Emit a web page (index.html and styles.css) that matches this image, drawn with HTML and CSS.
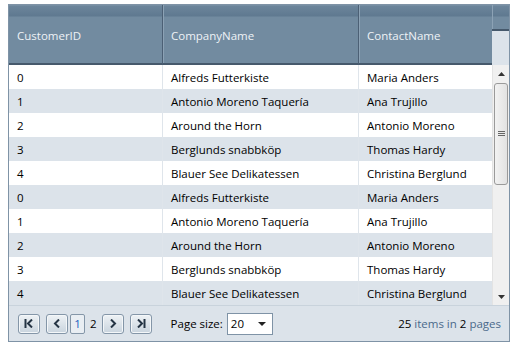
FILE: index.html
```html
<!DOCTYPE html>
<html>
<head>
<meta charset="utf-8">
<link rel="stylesheet" href="styles.css">
</head>
<body>
<div class="grid">
  <div class="head">
    <div class="hcell c1">CustomerID</div>
    <div class="hcell c2">CompanyName</div>
    <div class="hcell c3">ContactName</div>
    <div class="hscroll"><div class="hscroll-top"></div><div class="hscroll-bot"></div></div>
  </div>
  <div class="body">
    <div class="rows">
      <div class="row"><div class="cell c1">0</div><div class="cell c2">Alfreds Futterkiste</div><div class="cell c3">Maria Anders</div></div>
      <div class="row alt"><div class="cell c1">1</div><div class="cell c2">Antonio Moreno Taquería</div><div class="cell c3">Ana Trujillo</div></div>
      <div class="row"><div class="cell c1">2</div><div class="cell c2">Around the Horn</div><div class="cell c3">Antonio Moreno</div></div>
      <div class="row alt"><div class="cell c1">3</div><div class="cell c2">Berglunds snabbköp</div><div class="cell c3">Thomas Hardy</div></div>
      <div class="row"><div class="cell c1">4</div><div class="cell c2">Blauer See Delikatessen</div><div class="cell c3">Christina Berglund</div></div>
      <div class="row alt"><div class="cell c1">0</div><div class="cell c2">Alfreds Futterkiste</div><div class="cell c3">Maria Anders</div></div>
      <div class="row"><div class="cell c1">1</div><div class="cell c2">Antonio Moreno Taquería</div><div class="cell c3">Ana Trujillo</div></div>
      <div class="row alt"><div class="cell c1">2</div><div class="cell c2">Around the Horn</div><div class="cell c3">Antonio Moreno</div></div>
      <div class="row"><div class="cell c1">3</div><div class="cell c2">Berglunds snabbköp</div><div class="cell c3">Thomas Hardy</div></div>
      <div class="row alt"><div class="cell c1">4</div><div class="cell c2">Blauer See Delikatessen</div><div class="cell c3">Christina Berglund</div></div>
    </div>
    <div class="scrollbar">
      <div class="sb-btn"><svg width="7" height="4" viewBox="0 0 7 4"><path d="M0 4 L3.5 0 L7 4Z" fill="#333"/></svg></div>
      <div class="sb-track">
        <div class="thumb"><svg width="7" height="6" viewBox="0 0 7 6"><path d="M0 0.5h7M0 2.5h7M0 4.5h7" stroke="#666" stroke-width="1"/></svg></div>
      </div>
      <div class="sb-btn"><svg width="7" height="4" viewBox="0 0 7 4"><path d="M0 0 L3.5 4 L7 0Z" fill="#333"/></svg></div>
    </div>
  </div>
  <div class="pager">
    <div class="nav">
      <div class="pbtn"><svg width="10" height="9" viewBox="0 0 10 9"><path d="M1.5 0v9" stroke="#243444" stroke-width="2"/><path d="M8 0.5L4 4.5L8 8.5" stroke="#243444" stroke-width="2" fill="none"/></svg></div>
      <div class="pbtn prev"><svg width="10" height="9" viewBox="0 0 10 9"><path d="M7 0.5L3 4.5L7 8.5" stroke="#243444" stroke-width="2" fill="none"/></svg></div>
      <div class="pnum cur">1</div>
      <div class="pnum two">2</div>
      <div class="pbtn next"><svg width="10" height="9" viewBox="0 0 10 9"><path d="M3 0.5L7 4.5L3 8.5" stroke="#243444" stroke-width="2" fill="none"/></svg></div>
      <div class="pbtn last"><svg width="10" height="9" viewBox="0 0 10 9"><path d="M2 0.5L6 4.5L2 8.5" stroke="#243444" stroke-width="2" fill="none"/><path d="M8.5 0v9" stroke="#243444" stroke-width="2"/></svg></div>
    </div>
    <div class="psize">
      <span class="plabel">Page size:</span>
      <div class="select"><span>20</span><svg width="8" height="4" viewBox="0 0 8 4"><path d="M0 0L4 4L8 0Z" fill="#222"/></svg></div>
    </div>
    <div class="info"><b>25</b> items in <b>2</b> pages</div>
  </div>
</div>
</body>
</html>
```
FILE: styles.css
```css
* { box-sizing: border-box; }
body {
  margin: 0;
  background: #fff;
  font-family: "Open Sans", "Segoe UI", sans-serif;
  font-size: 11.5px;
  color: #000;
}
.grid {
  margin: 4px 0 0 8px;
  width: 502px;
  height: 338px;
  border: 1px solid #7f93a6;
  display: flex;
  flex-direction: column;
  background: #dce3ea;
}
.head {
  display: flex;
  height: 60px;
  flex: none;
}
.hcell {
  height: 60px;
  background: linear-gradient(#8097ab 0, #6c859b 1px, #5f7990 11px, #728ba0 12px, #728ba0 100%);
  border-bottom: 2px solid #46596c;
  color: #eef2f6;
  display: flex;
  align-items: center;
  padding-left: 8px;
  padding-top: 3px;
  border-right: 1px solid #4c6075;
  box-shadow: inset 1px 0 0 #8ca2b5;
}
.c1 { width: 154px; flex: none; }
.c2 { width: 196px; flex: none; }
.c3 { width: 133px; flex: none; }
.hcell.c1 { box-shadow: none; }
.hcell.c3 { border-right: none; }
.hscroll { width: 17px; flex: none; display: flex; flex-direction: column; }
.hscroll-top {
  height: 26px;
  background: linear-gradient(#8097ab 0, #6c859b 1px, #5f7990 11px, #728ba0 12px, #728ba0 100%);
  border-bottom: 2px solid #46596c;
  box-shadow: inset 1px 0 0 #8ca2b5;
}
.hscroll-bot { flex: 1; background: #dce3ea; }
.body {
  display: flex;
  height: 240px;
  flex: none;
}
.rows { width: 483px; flex: none; }
.row {
  display: flex;
  height: 24px;
  background: #fff;
}
.row.alt { background: #dce3ea; }
.cell {
  display: flex;
  align-items: center;
  padding-left: 8px;
  padding-top: 1px;
  white-space: nowrap;
  overflow: hidden;
}
.row .c2, .row .c3 { border-left: 1px solid #dfe5eb; }
.row .c1 { width: 153px; }
.row .c2 { width: 196px; }
.row .c3 { width: 134px; }
.scrollbar {
  width: 17px;
  flex: none;
  background: #f0f0f0;
  border-left: 1px solid #e3e3e3;
  display: flex;
  flex-direction: column;
}
.sb-btn {
  height: 17px;
  display: flex;
  align-items: center;
  justify-content: center;
  flex: none;
}
.sb-track { flex: 1; padding: 1px 1px 0 1px; }
.thumb {
  height: 102px;
  border: 1px solid #9a9a9a;
  border-radius: 3px;
  background: linear-gradient(90deg, #f2f2f2, #e2e2e2);
  display: flex;
  align-items: center;
  justify-content: center;
}
.pager {
  flex: 1;
  border-top: 1px solid #c9d3dc;
  display: flex;
  align-items: center;
  padding: 0 8px 0 9px;
}
.nav { display: flex; align-items: center; }
.pbtn {
  width: 22px;
  height: 20px;
  border: 1px solid #8496a8;
  border-radius: 3px;
  background: linear-gradient(#eef2f5, #c9d4de);
  display: flex;
  align-items: center;
  justify-content: center;
  box-shadow: inset 0 0 0 1px #f4f7f9;
}
.pbtn.prev { margin-left: 6px; }
.pbtn.next { margin-left: 5px; }
.pbtn.last { margin-left: 6px; }
.pnum.cur {
  margin-left: 2px;
  color: #1d5fbf;
  border: 1px solid #8496a8;
  border-radius: 2px;
  background: #e9eef3;
  height: 20px;
  width: 15px;
  display: flex;
  align-items: center;
  justify-content: center;
}
.pnum.two { margin-left: 5px; }
.psize { display: flex; align-items: center; margin-left: 19px; }
.plabel { margin-right: 4px; }
.select {
  width: 46px;
  height: 22px;
  background: #fff;
  border: 1px solid #7f93a6;
  display: flex;
  align-items: center;
  justify-content: space-between;
  padding: 0 6px 0 3px;
}
.info { margin-left: auto; color: #4a6a8a; }
.info b { font-weight: normal; color: #000; }
```
